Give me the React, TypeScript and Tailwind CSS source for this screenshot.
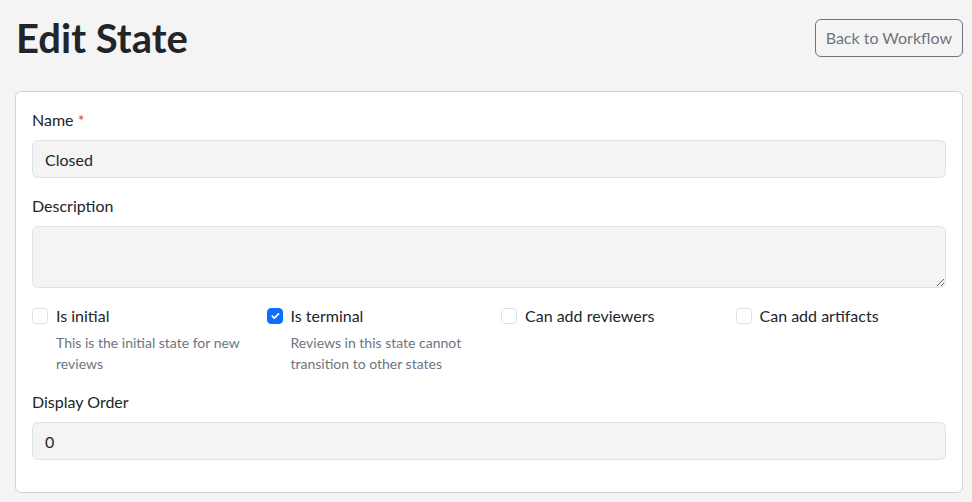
import * as React from "react";

const flags = [
  { label: "Is initial", help: "This is the initial state for new reviews", checked: false },
  { label: "Is terminal", help: "Reviews in this state cannot transition to other states", checked: true },
  { label: "Can add reviewers", help: "", checked: false },
  { label: "Can add artifacts", help: "", checked: false },
];

function Check({ checked }: { checked: boolean }) {
  if (checked) {
    return (
      <span className="mt-1 flex size-4 shrink-0 items-center justify-center rounded-[4px] border border-[#0d6efd] bg-[#0d6efd]">
        <svg viewBox="0 0 20 20" className="size-3.5" fill="none">
          <path d="M6 10l3 3 6-6" stroke="#fff" strokeWidth="2.5" strokeLinecap="round" strokeLinejoin="round" />
        </svg>
      </span>
    );
  }
  return <span className="mt-1 size-4 shrink-0 rounded-[4px] border border-[#dee2e6] bg-white" />;
}

export default function App() {
  return (
    <div className="min-h-[502px] bg-[#f4f4f4] pl-[15px] pr-[9px] pt-[14px] text-[#212529] [font-family:Lato,sans-serif]">
      <div className="mb-[29px] flex items-center justify-between">
        <h1 className="pl-[1px] text-[40px] leading-[48px] font-bold">Edit State</h1>
        <button className="h-[38px] rounded-md border border-[#6c757d] px-[10px] text-base text-[#6c757d]">
          Back to Workflow
        </button>
      </div>

      <div className="rounded-md border border-[#d3d3d3] bg-white p-4">
        <div className="mb-4">
          <label className="mb-2 block leading-6">
            Name <span className="text-[#dc3545]">*</span>
          </label>
          <input
            readOnly
            value="Closed"
            className="block h-[38px] w-full rounded-md border border-[#dee2e6] bg-[#f4f4f4] px-3 text-base outline-none"
          />
        </div>

        <div className="mb-4">
          <label className="mb-2 block leading-6">Description</label>
          <textarea
            readOnly
            rows={2}
            className="block h-[62px] w-full resize-y rounded-md border border-[#dee2e6] bg-[#f4f4f4] px-3 py-1.5 outline-none"
          />
        </div>

        <div className="mb-4 grid grid-cols-4 gap-6">
          {flags.map((f) => (
            <div key={f.label}>
              <div className="flex gap-2 leading-6">
                <Check checked={f.checked} />
                <span>{f.label}</span>
              </div>
              {f.help && (
                <p className="mt-1 pl-6 text-sm leading-[21px] text-[#6c757d]">{f.help}</p>
              )}
            </div>
          ))}
        </div>

        <div className="mb-4">
          <label className="mb-2 block leading-6">Display Order</label>
          <input
            readOnly
            value="0"
            className="block h-[38px] w-full rounded-md border border-[#dee2e6] bg-[#f4f4f4] px-3 text-base outline-none"
          />
        </div>
      </div>
    </div>
  );
}
